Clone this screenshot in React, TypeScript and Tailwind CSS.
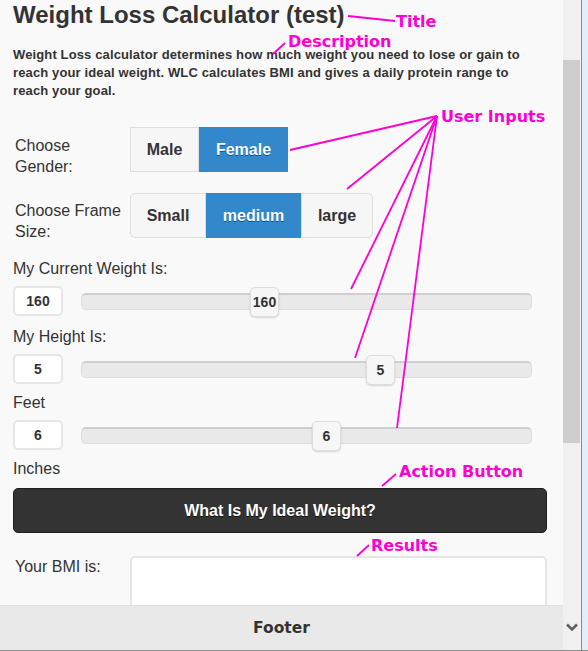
import React from "react";

const NOTE = "absolute font-['Comic_Sans_MS','DejaVu_Sans',cursive] font-bold text-[16px] text-[#ff00d4] leading-none whitespace-nowrap";

const Segmented = ({
  items,
  active,
  rounded,
}: {
  items: { label: string; w: string }[];
  active: string;
  rounded?: boolean;
}) => (
  <div className="flex h-[45px] text-base font-bold">
    {items.map((item, i) => (
      <div
        key={item.label}
        className={`flex items-center justify-center ${item.w} ${
          item.label === active
            ? "bg-[#3388cc] text-white [text-shadow:0_1px_0_#005599]"
            : "bg-[#f6f6f6] border border-[#dddddd] text-[#333333]"
        } ${rounded && i === 0 ? "rounded-l-[5px]" : ""} ${rounded && i === items.length - 1 ? "rounded-r-[5px]" : ""}`}
      >
        {item.label}
      </div>
    ))}
  </div>
);

const SliderRow = ({ value, thumb }: { value: string; thumb: string }) => (
  <div className="flex items-center h-[30px] gap-[18px]">
    <div className="w-[50px] h-[30px] flex items-center justify-center bg-white border-2 border-[#e6e6e6] rounded-[5px] text-sm font-bold text-[#333333]">
      {value}
    </div>
    <div className="relative w-[451px] h-[17px] bg-[#e9e9e9] border border-[#dddddd] border-t-2 border-t-[#cfcfcf] rounded-[5px]">
      <div
        className={`absolute top-[-8px] ${thumb} w-[29px] h-[30px] flex items-center justify-center bg-[#f6f6f6] border border-[#dddddd] rounded-[5px] text-sm font-bold text-[#333333] shadow-[0_1px_2px_rgba(0,0,0,0.15)]`}
      >
        {value}
      </div>
    </div>
  </div>
);

export default function App() {
  return (
    <div className="relative w-[588px] h-[651px] overflow-hidden bg-[#f9f9f9] font-['Liberation_Sans',Arial,sans-serif] text-[#333333]">
      <div className="flex h-[650px]">
        <div className="w-[563px] flex flex-col overflow-hidden">
          <div className="flex-1 overflow-hidden pl-[13px] pr-[16px]">
            <h1 className="text-2xl font-bold leading-[30px]">Weight Loss Calculator (test)</h1>
            <p className="mt-[16px] text-[13px] font-bold leading-[18px] w-[530px] tracking-[0.13px]">
              Weight Loss calculator determines how much weight you need to lose or gain to reach your ideal weight. WLC
              calculates BMI and gives a daily protein range to reach your goal.
            </p>

            <div className="mt-[27px] flex">
              <div className="w-[117px] pl-[2px] pt-[8px] text-base leading-[21px]">Choose Gender:</div>
              <Segmented
                active="Female"
                items={[
                  { label: "Male", w: "w-[69px]" },
                  { label: "Female", w: "w-[89px]" },
                ]}
              />
            </div>
            <div className="mt-[16px] flex">
              <div className="w-[117px] pl-[2px] pt-[7px] text-base leading-[21px]">Choose Frame Size:</div>
              <Segmented
                rounded
                active="medium"
                items={[
                  { label: "Small", w: "w-[76px]" },
                  { label: "medium", w: "w-[95px]" },
                  { label: "large", w: "w-[72px]" },
                ]}
              />
            </div>

            <div className="mt-[16px] text-base leading-[21px]">My Current Weight Is:</div>
            <div className="mt-[7px]">
              <SliderRow value="160" thumb="left-[168px]" />
            </div>
            <div className="mt-[10px] text-base leading-[21px]">My Height Is:</div>
            <div className="mt-[7px]">
              <SliderRow value="5" thumb="left-[284px]" />
            </div>
            <div className="mt-[8px] text-base leading-[21px]">Feet</div>
            <div className="mt-[7px]">
              <SliderRow value="6" thumb="left-[230px]" />
            </div>
            <div className="mt-[8px] text-base leading-[21px]">Inches</div>

            <div className="mt-[9px] w-[534px] h-[45px] flex items-center justify-center bg-[#333333] border border-[#1f1f1f] rounded-[5px] text-base font-bold text-white [text-shadow:0_1px_0_#111111]">
              What Is My Ideal Weight?
            </div>

            <div className="mt-[23px] flex">
              <div className="w-[117px] pl-[2px] text-base leading-[21px]">Your BMI is:</div>
              <div className="w-[417px] h-[80px] bg-white border-2 border-[#e6e6e6] rounded-[5px]" />
            </div>
          </div>
          <div className="h-[45px] shrink-0 flex items-center justify-center pt-px bg-[#e9e9e9] border-t border-[#dddddd] font-['DejaVu_Sans',sans-serif] text-[15.5px] font-bold text-[#333333]">
            Footer
          </div>
        </div>

        <div className="w-[17px] flex flex-col bg-[#f0f0f0]">
          <div className="mt-[60px] h-[383px] bg-[#cdcdcd]" />
          <div className="mt-auto mb-[14px] h-[17px] flex items-center justify-center">
            <svg width="12" height="9" viewBox="0 0 12 9" fill="none" stroke="#606060" strokeWidth="2.6">
              <path d="M1 1.5 L6 6.5 L11 1.5" />
            </svg>
          </div>
        </div>
        <div className="w-[8px] flex">
          <div className="w-px bg-[#f4f4f4]" />
          <div className="w-px bg-[#8a8a8a]" />
          <div className="flex-1 bg-[#e4edf7]" />
        </div>
      </div>
      <div className="h-px bg-[#8a8a8a]" />

      {/* annotations drawn over the page */}
      <svg className="absolute inset-0" width="588" height="651" fill="none" stroke="#ff00d4" strokeWidth="1.8">
        <path d="M348 16 L395 21" />
        <path d="M273 54 L285 43" />
        <path d="M290 150 L437 116" />
        <path d="M347 189 L437 116" />
        <path d="M351 289 L437 116" />
        <path d="M355 358 L437 116" />
        <path d="M397 428 L437 116" />
        <path d="M382 486 L396 474" />
        <path d="M357 556 L369 545" />
      </svg>
      <div className={`${NOTE} left-[396px] top-[14px]`}>Title</div>
      <div className={`${NOTE} left-[288px] top-[34px]`}>Description</div>
      <div className={`${NOTE} left-[441px] top-[109px]`}>User Inputs</div>
      <div className={`${NOTE} left-[399px] top-[464px]`}>Action Button</div>
      <div className={`${NOTE} left-[371px] top-[538px]`}>Results</div>
    </div>
  );
}
